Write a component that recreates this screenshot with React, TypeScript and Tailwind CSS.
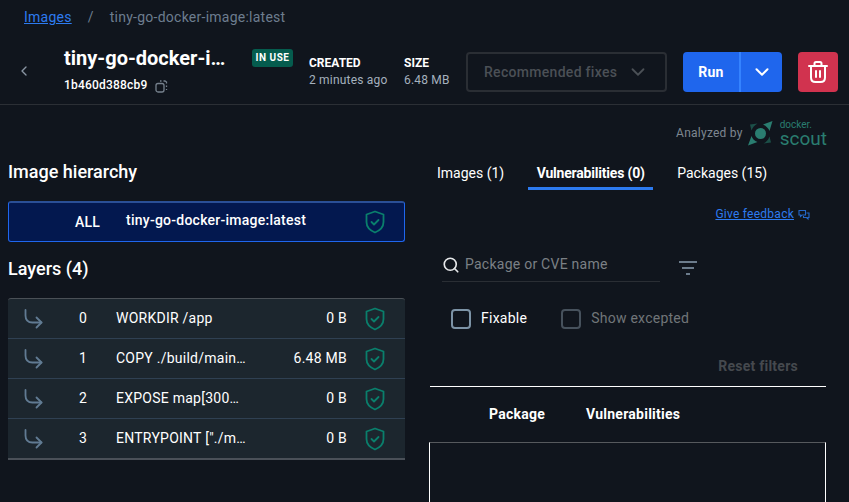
import { ChevronDown, ChevronLeft, Search } from "lucide-react";

const layers = [
  { index: "0", name: "WORKDIR /app", size: "0 B" },
  { index: "1", name: "COPY ./build/main…", size: "6.48 MB" },
  { index: "2", name: "EXPOSE map[300…", size: "0 B" },
  { index: "3", name: 'ENTRYPOINT ["./m…', size: "0 B" },
];

const Shield = () => (
  <svg width="20" height="24" viewBox="0 0 20 24" fill="none" stroke="#0a7f6c" strokeWidth="1.800" strokeLinecap="round" strokeLinejoin="round" className="shrink-0">
    <path d="M10 1.500 18.500 4.500V12c0 4.800-3.400 8.400-8.500 10.500C4.900 20.400 1.500 16.800 1.500 12V4.500Z" />
    <path d="m6.500 12 2.500 2.500 4.500-4.500" />
  </svg>
);

const LayerArrow = () => (
  <svg width="19" height="20" viewBox="0 0 19 20" fill="none" stroke="#617b93" strokeWidth="1.800" strokeLinecap="round" strokeLinejoin="round">
    <path d="M1.500 1v5.500c0 4.500 2.500 7 7 7H17.500" />
    <path d="M12.500 8.500 17.500 13.500 12.500 18.500" />
  </svg>
);

const CopyIcon = () => (
  <svg width="13" height="13" viewBox="0 0 13 13" fill="none" stroke="#76818d" strokeWidth="1.300" className="mt-[2px] ml-[8px]">
    <rect x="1" y="3.500" width="8" height="8.500" rx="2" />
    <path d="M5 1h1.500M8.500 1h1.500l1.500 1v1.500M11.500 5.500v1.500M11.500 9v1" />
  </svg>
);

const TrashIcon = () => (
  <svg width="20" height="22" viewBox="0 0 20 22" fill="none" stroke="#fff" strokeWidth="2" strokeLinecap="round" strokeLinejoin="round">
    <path d="M1 5h18" />
    <path d="M6.500 4.500V2.500q0-1.500 1.500-1.500h4q1.500 0 1.500 1.500v2" />
    <path d="M3 5v11.500q0 4.500 4.500 4.500h5q4.500 0 4.500-4.500V5" />
    <path d="M8 10v6M12 10v6" />
  </svg>
);

const ScoutLogo = () => (
  <svg width="25" height="25" viewBox="0 0 25 25" fill="#2a7d70" className="shrink-0">
    <circle cx="12.500" cy="12.500" r="5.500" />
    <path d="M2 3.500 9.500 2.500 Q5 5 3.500 9.500Z" fill="#1c4f48" />
    <path d="M24.500 0 21.500 10 Q20 6 15 3.500Z" />
    <path d="M0 24.500 3.500 15 Q5 19.500 9.500 21Z" />
    <path d="M23 21.500 15.500 22.500 Q20 20 21.500 15.500Z" fill="#1c4f48" />
  </svg>
);

const App = () => {
  return (
    <div className="w-[849px] h-[502px] overflow-hidden bg-[#10151d] text-white font-['Roboto',sans-serif] tracking-[0.25px]">
      {/* Breadcrumb */}
      <div className="h-[35px] pl-[24px] flex items-center text-[14px] text-[#6d7d8f]">
        <a className="text-[#2d7bf0] underline">Images</a>
        <span className="ml-[16px]">/</span>
        <span className="ml-[16px]">tiny-go-docker-image:latest</span>
      </div>

      {/* Header */}
      <div className="h-[70px] border-b border-[#2b2f35] flex">
        <div className="w-[64px] pl-[16px] pt-[28px]">
          <ChevronLeft size={16} className="text-[#8a96a3]" />
        </div>
        <div className="w-[188px] pt-[9px]">
          <h1 className="text-[20px] leading-[28px] font-bold tracking-normal">tiny-go-docker-i…</h1>
          <div className="flex items-center mt-[5px] text-[12px] leading-[16px] font-medium tracking-[0.2px]">
            1b460d388cb9
            <CopyIcon />
          </div>
        </div>
        <div className="w-[57px] pt-[14px]">
          <span className="block w-[41px] h-[18px] rounded-[3px] bg-[#055c4e] text-[10px] leading-[18px] font-bold text-center tracking-[0.5px]">IN USE</span>
        </div>
        <div className="w-[95px] pt-[20px]">
          <div className="text-[12px] leading-[16px] font-bold tracking-normal">CREATED</div>
          <div className="text-[12px] leading-[18px] text-[#a5b1bd] tracking-[0.2px]">2 minutes ago</div>
        </div>
        <div className="w-[62px] pt-[20px]">
          <div className="text-[12px] leading-[16px] font-bold tracking-normal">SIZE</div>
          <div className="text-[12px] leading-[18px] text-[#a5b1bd] tracking-[0.2px]">6.48 MB</div>
        </div>
        <div className="pt-[17px] flex items-start">
          <button className="w-[201px] h-[40px] rounded-[4px] border-2 border-[#2a2e34] flex items-center pl-[16px] text-[14px] font-medium text-[#4b5056] tracking-[0.3px]">
            Recommended fixes
            <ChevronDown size={22} className="ml-[10px] text-[#4b5056]" />
          </button>
          <div className="ml-[16px] w-[99px] h-[40px] rounded-[4px] bg-[#1f66ed] flex text-[14px] font-bold">
            <div className="w-[58px] flex items-center justify-center border-r-2 border-[#3583ff]">Run</div>
            <div className="flex-1 flex items-center justify-center">
              <ChevronDown size={22} strokeWidth={2.200} />
            </div>
          </div>
          <div className="ml-[16px] w-[40px] h-[40px] rounded-[4px] bg-[#d1334f] flex items-center justify-center">
            <TrashIcon />
          </div>
        </div>
      </div>

      {/* Analyzed by */}
      <div className="h-[50px] pt-[6px] pr-[22px] flex items-center justify-end">
        <span className="text-[12px] text-[#7e8791]">Analyzed by</span>
        <span className="ml-[5px]"><ScoutLogo /></span>
        <div className="ml-[7px] mt-[1px] flex flex-col text-[#2a7d70] tracking-normal">
          <span className="text-[10px] leading-[10px]">docker.</span>
          <span className="text-[19px] leading-[17px]">scout</span>
        </div>
      </div>

      <div className="flex pl-[8px]">
        {/* Left column */}
        <div className="w-[397px]">
          <h2 className="mt-[3px] text-[18px] leading-[28px] font-medium tracking-normal">Image hierarchy</h2>
          <div className="mt-[15px] h-[41px] rounded-[3px] border border-[#1f66ed] border-t-2 border-t-[#2a4f96] bg-[#03184f] flex items-center text-[14px] font-medium">
            <span className="ml-[66px] w-[51px]">ALL</span>
            <span className="flex-1 pb-[3px]">tiny-go-docker-image:latest</span>
            <span className="mr-[19px]"><Shield /></span>
          </div>
          <h2 className="mt-[13px] text-[18px] leading-[28px] font-medium tracking-normal">Layers (4)</h2>
          <div className="mt-[15px] rounded-t-[3px] border-t border-t-[#4a5056] border-b-2 border-b-[#4a5058] bg-[#1c262e]">
            {layers.map((layer, i) => (
              <div key={layer.index} className={`flex items-center text-[14px] ${i > 0 ? "h-[40px] border-t border-[#2f4052]" : "h-[39px]"}`}>
                <span className="ml-[16px] w-[55px] shrink-0">
                  <LayerArrow />
                </span>
                <span className="w-[37px] shrink-0">{layer.index}</span>
                <span className="w-[140px] shrink-0 whitespace-nowrap">{layer.name}</span>
                <span className="w-[91px] shrink-0 text-right">{layer.size}</span>
                <span className="ml-[18px]"><Shield /></span>
              </div>
            ))}
          </div>
        </div>

        {/* Right column */}
        <div className="ml-[25px] w-[396px]">
          <div className="flex text-[14px] h-[35px] pl-[7px] tracking-normal">
            <div className="pt-[8px]">Images (1)</div>
            <div className="ml-[24px] w-[125px] h-[35px] pt-[8px] text-center font-bold tracking-[-0.2px] border-b-[3px] border-[#2d7bf0]">Vulnerabilities (0)</div>
            <div className="ml-[24px] pt-[8px]">Packages (15)</div>
          </div>
          <div className="mt-[14px] h-[20px] pr-[16px] flex items-center justify-end text-[12px] text-[#2d7bf0]">
            <a className="underline">Give feedback</a>
            <svg width="12" height="12" viewBox="0 0 12 12" fill="none" stroke="#2468c8" strokeWidth="1.100" className="ml-[4px] mt-[2px]">
              <path d="M1 1.500h6.500v4.500H4L2.500 7.500V6H1Z" />
              <path d="M8.500 4h2.500v4.500h-1V10L8.500 8.500H5.500V7" />
            </svg>
          </div>
          <div className="mt-[30px] flex">
            <div className="ml-[12px] w-[218px] h-[28px] border-b border-[#2a2e34] flex items-start text-[14px] text-[#7b8085]">
              <Search size={18} strokeWidth={2.200} className="text-[#e6e8ea] mt-[2px]" />
              <span className="ml-[5px]">Package or CVE name</span>
            </div>
            <div className="ml-[19px] mt-[7px] w-[18px] flex flex-col items-center gap-[4px]">
              <span className="h-[2px] w-[18px] bg-[#6c7c8c]" />
              <span className="h-[2px] w-[12px] bg-[#6c7c8c]" />
              <span className="h-[2px] w-[4px] bg-[#6c7c8c]" />
            </div>
          </div>
          <div className="mt-[27px] ml-[21px] flex items-center text-[14px] h-[20px]">
            <span className="w-[20px] h-[20px] rounded-[4px] border-2 border-[#7c93a6]" />
            <span className="ml-[10px] pb-[2px]">Fixable</span>
            <span className="ml-[34px] w-[20px] h-[20px] rounded-[4px] border-2 border-[#46515c]" />
            <span className="ml-[10px] pb-[2px] text-[#717579]">Show excepted</span>
          </div>
          <div className="mt-[28px] pr-[28px] text-right text-[14px] leading-[18px] font-bold text-[#45494e]">Reset filters</div>
          <div className="mt-[11px] h-[1px] bg-white" />
          <div className="mt-[18px] flex text-[14px] leading-[18px] font-bold">
            <span className="ml-[59px]">Package</span>
            <span className="ml-[41px]">Vulnerabilities</span>
          </div>
          <div className="mt-[19px] -ml-[1px] h-[100px] border-x border-white border-t border-t-[#56595d]" />
        </div>
      </div>
    </div>
  );
};

export default App;
